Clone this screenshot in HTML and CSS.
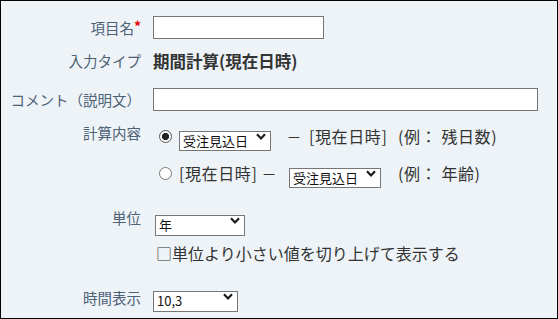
FILE: index.html
```html
<!DOCTYPE html>
<html lang="ja">
<head>
<meta charset="utf-8">
<title>期間計算</title>
<link rel="stylesheet" href="styles.css">
</head>
<body>
<div class="panel">
  <div class="row row-name">
    <div class="label">項目名<span class="req">*</span></div>
    <div class="field"><input class="text text-short" type="text"></div>
  </div>
  <div class="row row-type">
    <div class="label">入力タイプ</div>
    <div class="field"><span class="value">期間計算(現在日時)</span></div>
  </div>
  <div class="row row-comment">
    <div class="label">コメント（説明文）</div>
    <div class="field"><input class="text text-long" type="text"></div>
  </div>
  <div class="row row-calc">
    <div class="label label-top">計算内容</div>
    <div class="field calc">
      <input class="radio" type="radio" name="calc" checked>
      <span class="select sel-date"><select><option>受注見込日</option></select><svg class="chev" viewBox="0 0 10 7"><path d="M1 1.2 L5 5.4 L9 1.2"/></svg></span>
      <span class="txt"><span class="dash dash-lead">−</span>[現在日時]</span>
      <span class="txt">(例：&nbsp;残日数)</span>

      <input class="radio" type="radio" name="calc">
      <span class="txt">[現在日時]<span class="dash dash-trail">−</span></span>
      <span class="select sel-date"><select><option>受注見込日</option></select><svg class="chev" viewBox="0 0 10 7"><path d="M1 1.2 L5 5.4 L9 1.2"/></svg></span>
      <span class="txt">(例：&nbsp;年齢)</span>
    </div>
  </div>
  <div class="row row-unit">
    <div class="label label-top">単位</div>
    <div class="field field-unit"><span class="select sel-unit"><select><option>年</option></select><svg class="chev" viewBox="0 0 10 7"><path d="M1 1.2 L5 5.4 L9 1.2"/></svg></span></div>
  </div>
  <div class="row row-check">
    <div class="label"></div>
    <div class="field field-check"><span class="txt">□単位より小さい値を切り上げて表示する</span></div>
  </div>
  <div class="row row-time">
    <div class="label">時間表示</div>
    <div class="field"><span class="select sel-time"><select><option>10,3</option></select><svg class="chev" viewBox="0 0 10 7"><path d="M1 1.2 L5 5.4 L9 1.2"/></svg></span></div>
  </div>
</div>
</body>
</html>
```
FILE: styles.css
```css
html, body {
  margin: 0;
  padding: 0;
}
body {
  font-family: "Noto Sans CJK JP", "Noto Sans", sans-serif;
  color: #333;
}
.panel {
  width: 558px;
  height: 319px;
  box-sizing: border-box;
  border: 1px solid #000;
  background: #eef3f7;
  padding-top: 15px;
}
.row {
  display: grid;
  grid-template-columns: 140px 1fr;
  column-gap: 12px;
  align-items: center;
}
.label {
  text-align: right;
  font-size: 14.5px;
  line-height: 16px;
  color: #4d6276;
  white-space: nowrap;
}
.label-top {
  align-self: start;
  line-height: 13px;
}
.req {
  color: #e60000;
  font-size: 14px;
  font-weight: bold;
  vertical-align: 2px;
  line-height: 10px;
}
.field {
  display: flex;
  align-items: center;
}
.row-name { height: 23px; }
.row-type { height: 22px; margin-top: 11px; }
.row-comment { height: 23px; margin-top: 16px; }
.row-calc { margin-top: 15px; }
.row-unit { height: 21px; margin-top: 27px; }
.row-check { height: 21px; margin-top: 11px; }
.row-time { height: 21px; margin-top: 23px; }

.text {
  box-sizing: border-box;
  height: 23px;
  border: 1px solid #767676;
  background: #fff;
  margin: 0;
  padding: 0 3px;
  font: 13px "Noto Sans CJK JP", sans-serif;
}
.text-short { width: 171px; }
.text-long { width: 385px; }

.value {
  font-size: 16.5px;
  font-weight: bold;
  line-height: 22px;
  color: #333;
}

.calc {
  display: grid;
  grid-template-columns: 13px 103px 102px auto;
  grid-auto-rows: 21px;
  column-gap: 7px;
  row-gap: 16px;
  align-items: center;
  margin-left: 6px;
}
.txt {
  font-size: 16px;
  line-height: 21px;
  color: #333;
  white-space: nowrap;
}
.calc .txt {
  letter-spacing: 0.6px;
}
.dash {
  display: inline-block;
  width: 11px;
  text-align: center;
  transform: scaleX(1.4);
}
.dash-lead { margin-right: 9px; }
.dash-trail { margin-left: 7px; }
.radio {
  appearance: none;
  -webkit-appearance: none;
  box-sizing: border-box;
  width: 13px;
  height: 13px;
  margin: 0;
  border: 1px solid #7a7a7a;
  border-radius: 50%;
  background: #fff;
}
.radio:checked {
  border-color: #555;
  background: radial-gradient(circle, #222 0 3.3px, #fff 3.9px);
}

.select {
  position: relative;
  display: inline-block;
  height: 20px;
}
.select select {
  appearance: none;
  -webkit-appearance: none;
  box-sizing: border-box;
  width: 100%;
  height: 100%;
  margin: 0;
  border: 1px solid #767676;
  border-radius: 0;
  background: #fff;
  padding: 0 0 0 3px;
  font: 13px/18px "Noto Sans CJK JP", sans-serif;
  color: #111;
}
.chev {
  position: absolute;
  right: 5px;
  top: 6px;
  width: 10px;
  height: 7px;
  pointer-events: none;
}
.chev path {
  fill: none;
  stroke: #1a1a1a;
  stroke-width: 2.2;
}
.sel-date { width: 92px; }
.sel-unit { width: 90px; height: 21px; }
.sel-time { width: 85px; height: 21px; }
.field-unit { padding-left: 2px; }
.field-check { padding-left: 3px; }
```
